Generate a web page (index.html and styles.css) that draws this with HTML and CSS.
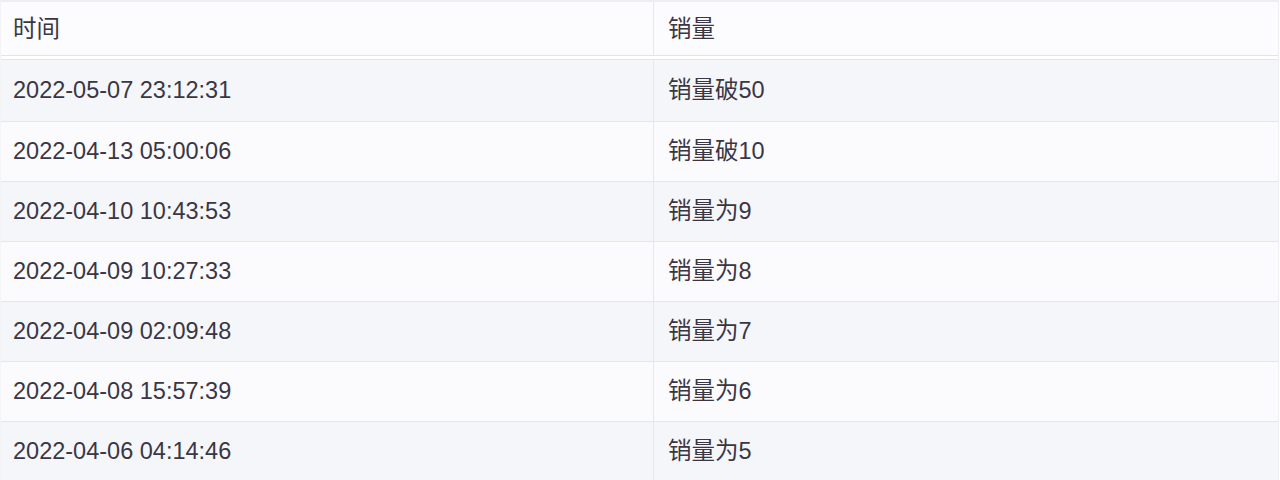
FILE: index.html
```html
<!DOCTYPE html>
<html lang="zh">
<head>
<meta charset="utf-8">
<link rel="stylesheet" href="styles.css">
</head>
<body>
<div class="table">
  <div class="row head">
    <div class="cell c1">时间</div>
    <div class="cell c2">销量</div>
  </div>
  <div class="row first odd">
    <div class="cell c1">2022-05-07 23:12:31</div>
    <div class="cell c2">销量破50</div>
  </div>
  <div class="row even">
    <div class="cell c1">2022-04-13 05:00:06</div>
    <div class="cell c2">销量破10</div>
  </div>
  <div class="row odd">
    <div class="cell c1">2022-04-10 10:43:53</div>
    <div class="cell c2">销量为9</div>
  </div>
  <div class="row even">
    <div class="cell c1">2022-04-09 10:27:33</div>
    <div class="cell c2">销量为8</div>
  </div>
  <div class="row odd">
    <div class="cell c1">2022-04-09 02:09:48</div>
    <div class="cell c2">销量为7</div>
  </div>
  <div class="row even">
    <div class="cell c1">2022-04-08 15:57:39</div>
    <div class="cell c2">销量为6</div>
  </div>
  <div class="row odd">
    <div class="cell c1">2022-04-06 04:14:46</div>
    <div class="cell c2">销量为5</div>
  </div>
</div>
</body>
</html>
```

FILE: styles.css
```css
html, body {
  margin: 0;
  padding: 0;
  background: #ffffff;
}

body {
  font-family: "Liberation Sans", "Noto Sans CJK SC", sans-serif;
  font-size: 23.5px;
  color: #3a3644;
  overflow: hidden;
}

.table {
  width: 1279px;
  border-top: 2px solid #eceef1;
  border-right: 1px solid #eef0f3;
  border-left: 1px solid #f3f4f6;
  box-sizing: border-box;
}

.row {
  display: grid;
  grid-template-columns: 653px 1fr;
  height: 60px;
  border-top: 1px solid #e4e6ea;
  box-sizing: border-box;
}

.row.head {
  height: 54px;
  border-top: none;
  border-bottom: 1px solid #e2e4e8;
  background: #fcfcfe;
}

.row.head .cell {
  padding-top: 3px;
}

.row.first {
  height: 62px;
  margin-top: 3px;
  border-top: 1px solid #e2e4e8;
}

.row.odd {
  background: #f5f6f9;
}

.row.even {
  background: #fbfbfd;
}

.cell {
  display: flex;
  align-items: center;
  white-space: nowrap;
  line-height: 1;
}

.c1 {
  padding-left: 12px;
  border-right: 1px solid #e6e8ec;
}

.c2 {
  padding-left: 14px;
}
```
